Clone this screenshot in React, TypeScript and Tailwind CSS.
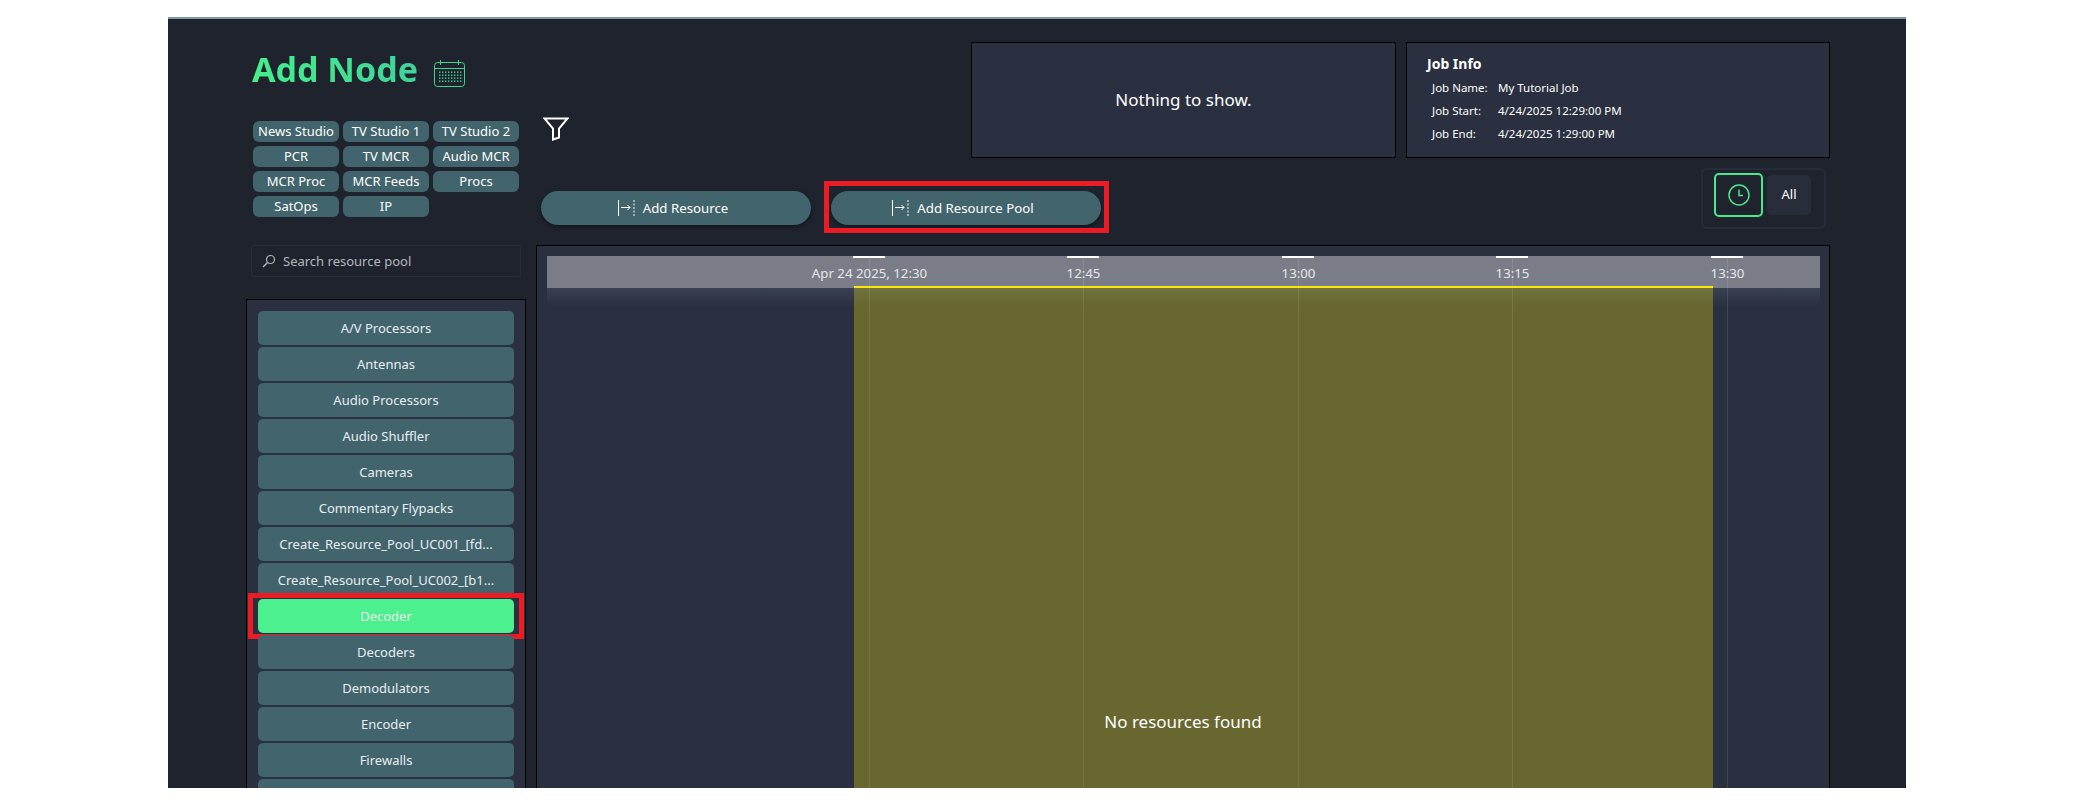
const poolTags = [
  "News Studio",
  "TV Studio 1",
  "TV Studio 2",
  "PCR",
  "TV MCR",
  "Audio MCR",
  "MCR Proc",
  "MCR Feeds",
  "Procs",
  "SatOps",
  "IP",
];

const resourcePools = [
  "A/V Processors",
  "Antennas",
  "Audio Processors",
  "Audio Shuffler",
  "Cameras",
  "Commentary Flypacks",
  "Create_Resource_Pool_UC001_[fd...",
  "Create_Resource_Pool_UC002_[b1...",
  "Decoder",
  "Decoders",
  "Demodulators",
  "Encoder",
  "Firewalls",
  "",
];

const timeTicks = [
  { label: "Apr 24 2025, 12:30", left: "left-[332px]" },
  { label: "12:45", left: "left-[546px]" },
  { label: "13:00", left: "left-[761px]" },
  { label: "13:15", left: "left-[975px]" },
  { label: "13:30", left: "left-[1190px]" },
];

const jobInfo = [
  { label: "Job Name:", value: "My Tutorial Job" },
  { label: "Job Start:", value: "4/24/2025 12:29:00 PM" },
  { label: "Job End:", value: "4/24/2025 1:29:00 PM" },
];

function CalendarIcon() {
  const dots = [];
  for (let row = 0; row < 4; row++) {
    for (let col = 0; col < 8; col++) {
      dots.push(<rect key={`${row}-${col}`} x={5 + col * 3} y={11.5 + row * 3} width="1.4" height="1.4" />);
    }
  }
  return (
    <svg width="31" height="27" viewBox="0 0 31 27" fill="none" className="ml-[16px] mt-[8px] shrink-0">
      <rect x="0.5" y="2.5" width="30" height="24" rx="3" stroke="#3ed68f" />
      <path d="M0.5 8.5H30.5M6.5 0V5M24.5 0V5" stroke="#3ed68f" />
      <g fill="#3ed68f">{dots}</g>
    </svg>
  );
}

function FilterIcon() {
  return (
    <svg width="26" height="24" viewBox="0 0 26 24" fill="none" className="shrink-0">
      <path d="M1.5 1.5H24.5L16 11.5V20.5L10 22.5V11.5L1.5 1.5Z" stroke="white" strokeWidth="2" strokeLinejoin="miter" />
    </svg>
  );
}

function SearchIcon() {
  return (
    <svg width="14" height="14" viewBox="0 0 14 14" fill="none" className="shrink-0">
      <circle cx="8.5" cy="5.5" r="4" stroke="#b5b7bd" strokeWidth="1.2" />
      <path d="M5.5 8.5L1 13" stroke="#b5b7bd" strokeWidth="1.4" />
    </svg>
  );
}

function AddIcon() {
  return (
    <svg width="17" height="16" viewBox="0 0 17 16" fill="none" className="shrink-0">
      <path d="M0.5 0V16" stroke="white" />
      <path d="M3 7.5H12M9.5 5L12 7.5L9.5 10" stroke="white" />
      <path d="M16 0V16" stroke="white" strokeDasharray="2 1.5" />
    </svg>
  );
}

function ClockIcon() {
  return (
    <svg width="22" height="22" viewBox="0 0 22 22" fill="none">
      <circle cx="11" cy="11" r="10" stroke="#4ae88a" strokeWidth="1.5" />
      <path d="M11 5.5V11.5H15" stroke="#4ae88a" strokeWidth="1.5" />
    </svg>
  );
}

function AddButton({ label }: { label: string }) {
  return (
    <button className="flex h-[34px] w-[270px] items-center justify-center gap-2 rounded-[17px] bg-[#42646d] pr-[6px] text-[13.25px] text-white shadow-[0_2px_4px_rgba(0,0,0,0.4)]">
      <AddIcon />
      <span className="mt-px">{label}</span>
    </button>
  );
}

function Timeline() {
  return (
    <div className="relative flex-1 overflow-hidden border border-b-0 border-black bg-[#2a3040]">
      <div className="absolute left-[10px] right-[9px] top-[42px] h-[18px] bg-gradient-to-b from-[#3a4150] to-[#2a3040]" />
      <div className="absolute bottom-0 left-[317px] top-[42px] w-[859px] bg-[#67672f]">
        <div className="h-[18px] bg-gradient-to-b from-[#727240] to-[#67672f]" />
      </div>
      <div className="absolute left-[10px] right-[9px] top-[10px] h-[32px] bg-[#7a7d87]" />
      <div className="absolute left-[317px] top-[40px] h-[2px] w-[859px] bg-[#f7e70f]" />
      {timeTicks.map((tick) => (
        <div key={tick.label} className={`absolute bottom-0 top-[10px] ${tick.left} w-px bg-white/10`}>
          <div className="absolute left-[-16px] top-0 h-[2px] w-[32px] bg-white" />
          <span className="absolute left-1/2 top-[8px] -translate-x-1/2 whitespace-nowrap text-[13.25px] leading-[18px] text-[#e5e7eb]">
            {tick.label}
          </span>
        </div>
      ))}
      <div className="absolute left-0 right-0 top-[463px] text-center text-[17px] leading-[26px] text-white">
        No resources found
      </div>
    </div>
  );
}

export default function App() {
  return (
    <div className="min-h-[806px] bg-white pt-[17px] font-['Noto_Sans','Open_Sans',sans-serif]">
      <div className="ml-[168px] flex h-[771px] w-[1738px] overflow-hidden border-t-2 border-[#7d9aa3] bg-[#1f232e] pl-[78px]">
        <div className="flex w-[280px] shrink-0 flex-col">
          <div className="ml-[6px] mt-[26px] flex h-[48px] items-center">
            <h1 className="bg-gradient-to-r from-[#46ee8a] to-[#3fd49a] bg-clip-text text-[34px] font-bold leading-[48px] text-transparent">
              Add Node
            </h1>
            <CalendarIcon />
          </div>
          <div className="ml-[7px] mt-[28px] grid w-[266px] grid-cols-3 gap-x-[4px] gap-y-[4px]">
            {poolTags.map((tag) => (
              <button
                key={tag}
                className="h-[21px] whitespace-nowrap rounded-[6px] bg-[#42646d] text-[13px] leading-[21px] text-white"
              >
                {tag}
              </button>
            ))}
          </div>
          <div className="ml-[5px] mt-[28px] flex h-[32px] w-[270px] items-center gap-[7px] rounded-[3px] border border-[#272c3a] pl-[10px] text-[13px] text-[#b5b7bd]">
            <SearchIcon />
            <span className="mt-px">Search resource pool</span>
          </div>
          <div className="mt-[22px] flex flex-1 flex-col gap-[2px] overflow-hidden border border-b-0 border-black bg-[#2a3040] px-[11px] pt-[11px]">
            {resourcePools.map((pool, i) => (
              <div key={i} className="relative shrink-0">
                <button
                  className={`h-[34px] w-full whitespace-nowrap rounded-[5px] pt-px text-[13px] ${
                    pool === "Decoder" ? "bg-[#4cf08f] text-[#e5f5e5]" : "bg-[#42646d] text-[#e8eef0]"
                  }`}
                >
                  {pool}
                </button>
                {pool === "Decoder" && (
                  <div className="absolute left-[-10px] top-[-6px] h-[46px] w-[276px] border-[5px] border-[#ed1c24]" />
                )}
              </div>
            ))}
          </div>
        </div>

        <div className="ml-[10px] flex w-[1294px] shrink-0 flex-col">
          <div className="mt-[23px] flex h-[116px]">
            <div className="ml-[7px] mt-[75px]">
              <FilterIcon />
            </div>
            <div className="ml-auto flex h-full w-[425px] items-center justify-center border border-black bg-[#2a3040] text-[17px] text-white">
              Nothing to show.
            </div>
            <div className="ml-[10px] h-full w-[424px] border border-black bg-[#2a3040] pl-[20px] pt-[11px] text-white">
              <div className="text-[14px] font-bold leading-[20px]">Job Info</div>
              <div className="ml-[5px] mt-[2px] flex flex-col">
                {jobInfo.map((row) => (
                  <div key={row.label} className="flex h-[23px] items-center text-[11.5px]">
                    <span className="w-[66px]">{row.label}</span>
                    <span>{row.value}</span>
                  </div>
                ))}
              </div>
            </div>
          </div>

          <div className="mt-[10px] flex h-[61px] items-start">
            <div className="ml-[5px] mt-[23px] flex gap-[20px]">
              <AddButton label="Add Resource" />
              <div className="relative">
                <AddButton label="Add Resource Pool" />
                <div className="absolute left-[-7px] top-[-10px] h-[52px] w-[285px] border-[5px] border-[#ed1c24]" />
              </div>
            </div>
            <div className="ml-auto mr-[4px] flex h-[61px] w-[125px] gap-[4px] rounded-[6px] border-2 border-[#272c3a] pl-[11px] pt-[3px]">
              <button className="flex h-[44px] w-[49px] items-center justify-center rounded-[5px] border-2 border-[#4ae88a]">
                <ClockIcon />
              </button>
              <button className="mt-[2px] h-[40px] w-[44px] rounded-[5px] bg-[#282d3b] text-[13px] text-white">All</button>
            </div>
          </div>

          <div className="mt-[16px] flex flex-1 flex-col">
            <Timeline />
          </div>
        </div>
      </div>
    </div>
  );
}
